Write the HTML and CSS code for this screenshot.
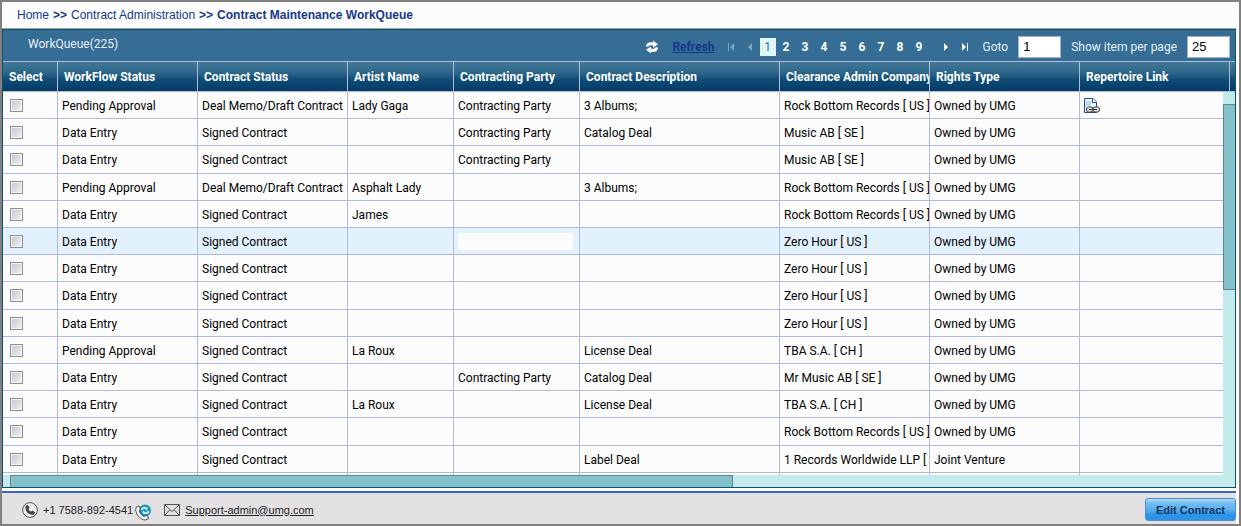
FILE: index.html
```
<!DOCTYPE html>
<html lang="en">
<head>
<meta charset="utf-8">
<title>Contract Maintenance WorkQueue</title>
<link rel="stylesheet" href="styles.css">
</head>
<body>
<nav class="crumbs" aria-label="Breadcrumb">
  <a href="#">Home</a> <b>&gt;&gt;</b> <a href="#">Contract Administration</a> <b>&gt;&gt;</b> <b>Contract Maintenance WorkQueue</b>
</nav>
<main class="panel">
  <div class="toolbar">
    <span class="queue-title">WorkQueue(225)</span>
    <svg class="refresh-icon" width="14" height="14" viewBox="0 0 14 14" fill="#fff"><path d="M1 6.500C1 3 4 1.500 8 2.400V.6L13 4.200 8 7.700V5.600C6 5 4 5 3.500 6.800Z"/><path d="M13 7.500C13 11 10 12.600 6 11.700V13.500L1 9.800 6 6.500V8.500C8 9.200 10 9 10.500 7.200Z"/></svg>
    <a class="refresh" href="#">Refresh</a>
    <div class="pager">
      <button class="step" aria-label="First page" disabled><svg width="8" height="8" viewBox="0 0 8 8"><path d="M1 0H2V8H1ZM7 0V8L3 4Z"/></svg></button>
      <button class="step" aria-label="Previous page" disabled><svg width="8" height="8" viewBox="0 0 8 8"><path d="M6 0V8L2 4Z"/></svg></button>
      <button class="page current">1</button><button class="page">2</button><button class="page">3</button><button class="page">4</button><button class="page">5</button><button class="page">6</button><button class="page">7</button><button class="page">8</button><button class="page">9</button>
      <button class="step next" aria-label="Next page"><svg width="8" height="8" viewBox="0 0 8 8"><path d="M2 0L6 4 2 8Z"/></svg></button>
      <button class="step" aria-label="Last page"><svg width="8" height="8" viewBox="0 0 8 8"><path d="M1 0L5 4 1 8ZM6 0H7V8H6Z"/></svg></button>
    </div>
    <label class="field goto">Goto <input type="text" value="1"></label>
    <label class="field">Show item per page <input type="text" value="25"></label>
  </div>
  <div class="grid-area">
    <table class="queue">
      <colgroup><col class="c-select"><col class="c-flow"><col class="c-status"><col class="c-artist"><col class="c-party"><col class="c-desc"><col class="c-company"><col class="c-rights"><col class="c-link"><col class="c-end"></colgroup>
      <thead><tr><th>Select</th><th>WorkFlow Status</th><th>Contract Status</th><th>Artist Name</th><th>Contracting Party</th><th>Contract Description</th><th>Clearance Admin Company</th><th>Rights Type</th><th>Repertoire Link</th><th></th></tr></thead>
      <tbody id="rows"></tbody>
    </table>
    <div class="vscroll"><div class="vthumb"></div></div>
  </div>
  <div class="hscroll"><div class="hthumb"></div></div>
</main>
<footer class="footer">
  <svg class="phone-icon" width="16" height="16" viewBox="0 0 16 16"><circle cx="8" cy="8" r="7.400" fill="#eee" stroke="#555"/><path d="M3.600 4.200L5.400 2.800 7.600 5.600 6.500 6.900C7 8 8 9 9.200 9.500L10.400 8.400 13.200 10.400 11.800 12.400C7 13.800 2.600 9 3.600 4.200Z" fill="#444"/></svg>
  <span class="phone">+1 7588-892-4541</span>
  <svg class="call-icon" width="17" height="17" viewBox="0 0 17 17"><circle cx="10" cy="6.500" r="6" fill="#129bc5"/><path d="M6.500 6C7 3.600 10 3 11 5M13.500 7C13 9.600 10 10 9 8" fill="none" stroke="#fff" stroke-width="1.500"/><path d="M9 3.500L12.500 3.500 12 6.500ZM11 9.600L7.500 9.600 8 6.600Z" fill="#fff"/><path d="M3 2L1 3.500C-.5 9 5 16 10.500 16L13.500 14.500 12.500 11.800 10.500 11.500 9.300 12.700C7 12 5 9.500 4.200 7.300L5 6 5 3Z" fill="#fff" stroke="#444"/></svg>
  <svg class="mail-icon" width="16" height="12" viewBox="0 0 16 12" fill="none" stroke="#555"><path d="M.5.5H15.500V11.500H.5ZM.5.5L8 7.500 15.500.5M.5 11.500L6 5.700M15.500 11.500L10 5.700"/></svg>
  <a class="mail" href="#">Support-admin@umg.com</a>
  <button class="edit">Edit Contract</button>
</footer>
<script src="rows.js"></script>
</body>
</html>
```
FILE: styles.css
```
* { box-sizing: border-box; }
html { height: 100%; }
body {
  margin: 0;
  min-height: 100%;
  display: flex;
  flex-direction: column;
  border: 2px solid #808080;
  background: #fcfcfc;
  color: #000;
  font: 12px/16px Roboto, "Noto Sans", sans-serif;
}
button, input { font: inherit; margin: 0; }
.crumbs {
  display: flex;
  gap: 4px;
  height: 26px;
  padding: 5px 15px;
  font: 12px/16px "Liberation Sans", Arial, sans-serif;
  color: #15388c;
}
.crumbs a { color: inherit; text-decoration: none; }
.panel {
  margin-right: 3px;
  border: 1px solid #0b5370;
  box-shadow: 0 -1px 0 #a5a5a5;
  margin-top: 1px;
  background: #fcfcfc;
}
.toolbar {
  height: 31px;
  display: flex;
  align-items: center;
  padding-top: 2px;
  background: #366d94;
  color: #e6f1f7;
}
.queue-title { margin: 0 auto 6px 25px; }
.refresh { margin: 0 7px 0 13px; font-weight: bold; color: #15388c; }
.pager { display: flex; align-items: center; }
.pager button { border: 0; padding: 0; background: none; color: #fff; }
.pager .step { width: 19px; height: 18px; display: grid; place-items: center; }
.step svg { fill: #fff; }
.step:disabled svg { fill: #7fa6bf; }
.pager .page { width: 19px; height: 18px; font-weight: bold; line-height: 18px; }
.pager .current { width: 16px; margin-right: 1px; background: #e0f6f8; color: #366d94; font-weight: normal; }
.pager .next { margin-left: 8px; }
.field { display: flex; align-items: center; gap: 10px; margin-right: 5px; }
.goto { margin: 0 10px 0 8px; }
.field input {
  width: 43px;
  height: 22px;
  padding: 0 4px;
  border: 1px solid #a3aedb;
  background: #fff;
  color: #000;
  font: 13px/20px "Liberation Sans", Arial, sans-serif;
}
.grid-area { position: relative; height: 414px; overflow: hidden; }
.queue { width: 100%; table-layout: fixed; border-collapse: separate; border-spacing: 0; }
.c-select { width: 55px; }
.c-flow { width: 140px; }
.c-status { width: 150px; }
.c-artist { width: 106px; }
.c-party { width: 126px; }
.c-desc { width: 200px; }
.c-company { width: 150px; }
.c-rights { width: 150px; }
.c-end { width: 5px; }
.queue th, .queue td {
  padding: 0 0 0 4px;
  overflow: hidden;
  white-space: nowrap;
  text-align: left;
  border-right: 1px solid #b0b9dc;
  border-bottom: 1px solid #b0b9dc;
}
.queue th {
  height: 31px;
  padding-left: 6px;
  border-top: 1px solid #b0b9dc;
  background: linear-gradient(#437897, #2a6488 40%, #0d4b76 62%, #053c66);
  color: #fff;
}
.queue th:last-child { border-right: 0; padding: 0; }
.queue td { height: 27px; padding-top: 1px; }
.queue td:last-child { padding: 0; }
.queue tr:nth-child(5n+3) td { height: 28px; }
.queue .hovered td { background: #e2f1fb; }
.queue td:first-child { padding: 0 0 0 7px; }
.queue input {
  appearance: none;
  display: block;
  width: 13px;
  height: 13px;
  margin: 0;
  border: 1px solid #8e8f8f;
  outline: 1px solid #f4f4f4;
  outline-offset: -2px;
  background: linear-gradient(135deg, #bfc6d0, #f2f2f2);
}
.queue svg { display: block; }
.blank { display: block; height: 17px; margin-right: 6px; background: #fcfcfc; }
.vscroll {
  position: absolute;
  top: 31px;
  right: 0;
  bottom: 0;
  width: 12px;
  padding-top: 12px;
  background: #c4ebeb;
}
.vthumb { height: 50%; border: 1px solid #5b8796; border-right: 0; background: #84c1cb; }
.hscroll { height: 12px; padding-left: 7px; background: #c4ebeb; }
.hthumb { width: 59%; height: 12px; border: 1px solid #5b8796; border-bottom: 0; background: #84c1cb; }
.footer {
  flex: 1;
  display: flex;
  align-items: center;
  margin: 3px 3px 0 0;
  padding: 2px 0 0 20px;
  border-top: 2px solid #366ab3;
  background: #e3e1e4;
  font: 11px/14px "Liberation Sans", Arial, sans-serif;
  color: #222;
}
.phone { margin: 0 2px 0 5px; }
.call-icon { margin-top: 5px; }
.mail-icon { margin: 0 5px 0 12px; }
.mail { color: #222; }
.edit {
  height: 23px;
  margin: 0 0 0 auto;
  padding: 0 10px;
  border: 1px solid #4a90d9;
  border-radius: 3px;
  background: linear-gradient(#b0dcf2, #74bdf2 20%, #5caef0 50%, #2d92e8 75%, #2b94ea);
  color: #0d3560;
  font: bold 11px/20px "Liberation Sans", Arial, sans-serif;
}
```
FILE: rows.js
```
const rows = [
  ["Pending Approval", "Deal Memo/Draft Contract", "Lady Gaga", "Contracting Party", "3 Albums;", "Rock Bottom Records [ US ]"],
  ["Data Entry", "Signed Contract", "", "Contracting Party", "Catalog Deal", "Music AB [ SE ]"],
  ["Data Entry", "Signed Contract", "", "Contracting Party", "", "Music AB [ SE ]"],
  ["Pending Approval", "Deal Memo/Draft Contract", "Asphalt Lady", "", "3 Albums;", "Rock Bottom Records [ US ]"],
  ["Data Entry", "Signed Contract", "James", "", "", "Rock Bottom Records [ US ]"],
  ["Data Entry", "Signed Contract", "", "<span class='blank'></span>", "", "Zero Hour [ US ]"],
  ["Data Entry", "Signed Contract", "", "", "", "Zero Hour [ US ]"],
  ["Data Entry", "Signed Contract", "", "", "", "Zero Hour [ US ]"],
  ["Data Entry", "Signed Contract", "", "", "", "Zero Hour [ US ]"],
  ["Pending Approval", "Signed Contract", "La Roux", "", "License Deal", "TBA S.A. [ CH ]"],
  ["Data Entry", "Signed Contract", "", "Contracting Party", "Catalog Deal", "Mr Music AB [ SE ]"],
  ["Data Entry", "Signed Contract", "La Roux", "", "License Deal", "TBA S.A. [ CH ]"],
  ["Data Entry", "Signed Contract", "", "", "", "Rock Bottom Records [ US ]"],
  ["Data Entry", "Signed Contract", "", "", "Label Deal", "1 Records Worldwide LLP [ G", "Joint Venture"],
  ["", "", "", "", "", "", " "]
];
const linkIcon = `<svg width="16" height="16" viewBox="0 0 16 16"><path d="M.5.5H9L12.500 4V14.500H.5Z" fill="#eef5fd" stroke="#1f4e96"/><path d="M8.500.5V4.500H12.500" fill="#fff" stroke="#1f4e96"/><path d="M2 3H7V8H2Z" fill="#bcd9f2"/><rect x="2.500" y="9" width="6.500" height="5" rx="2" fill="#ddd" stroke="#444"/><rect x="9" y="9" width="6.500" height="5" rx="2" fill="#ddd" stroke="#444"/><path d="M5 11.500H13" stroke="#333"/></svg>`;
document.getElementById("rows").innerHTML = rows.map((r, i) => {
  const box = r[0] ? `<input type="checkbox" aria-label="Select row ${i + 1}">` : "";
  const cells = [box, ...r.slice(0, 6), r[6] || "Owned by UMG", i === 0 ? linkIcon : "", ""];
  return `<tr${i === 5 ? ' class="hovered"' : ""}>${cells.map(c => `<td>${c}</td>`).join("")}</tr>`;
}).join("");
```
